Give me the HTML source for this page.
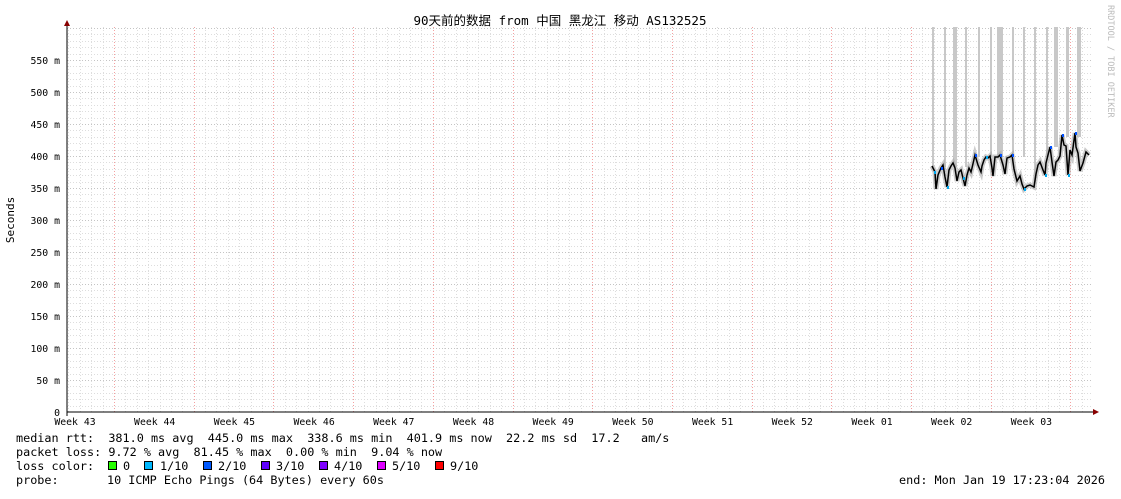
<!DOCTYPE html>
<html><head><meta charset="utf-8"><style>
body{margin:0;background:#fff;width:1121px;height:494px;overflow:hidden}
svg text{font-family:"DejaVu Sans Mono","Liberation Mono","Noto Sans CJK SC",monospace;font-size:9.8px;fill:#000}
svg text.lg{font-size:11.8px}
</style></head><body>
<svg width="1121" height="494" xmlns="http://www.w3.org/2000/svg">
<rect width="1121" height="494" fill="#fff"/>
<g id="grid"></g>
<g fill="#c8c8c8">
<rect x="932" y="27" width="2" height="140"/><rect x="944" y="27" width="2" height="140"/>
<rect x="953" y="27" width="4" height="140"/><rect x="965" y="27" width="2" height="140"/>
<rect x="978" y="27" width="2" height="130"/><rect x="990" y="27" width="2" height="130"/>
<rect x="997" y="27" width="6" height="130"/><rect x="1012" y="27" width="2" height="130"/>
<rect x="1023" y="27" width="2" height="130"/><rect x="1034" y="27" width="2" height="155"/>
<rect x="1046" y="27" width="2" height="130"/><rect x="1054" y="27" width="4" height="120"/>
<rect x="1066" y="27" width="3" height="110"/><rect x="1077" y="27" width="4" height="110"/>
</g>
<polyline fill="none" stroke="#aaa" stroke-width="5" opacity="0.6" points="932,166 935,172 936,189 938,175 941,168 943,165 945,177 947,187 949,170 951,166 953,163 955,168 957,181 959,172 961,170 963,178 965,186 967,175 969,168 971,172 972,168 975,155 978,165 981,172 982,166 984,160 986,157 988,158 990,156 992,168 993,176 995,157 998,157 1000,155 1003,165 1005,174 1007,158 1010,157 1012,155 1014,169 1017,181 1020,176 1022,184 1024,189 1027,186 1030,185 1034,187 1036,174 1038,165 1040,162 1043,170 1045,175 1046,163 1048,155 1050,147 1052,162 1054,176 1056,162 1058,160 1060,156 1062,135 1064,145 1066,146 1068,175 1070,150 1072,155 1075,133 1076,147 1078,153 1080,171 1083,163 1086,152 1089,155"/>
<polyline fill="none" stroke="#000" stroke-width="1.5" points="932,166 935,172 936,189 938,175 941,168 943,165 945,177 947,187 949,170 951,166 953,163 955,168 957,181 959,172 961,170 963,178 965,186 967,175 969,168 971,172 972,168 975,155 978,165 981,172 982,166 984,160 986,157 988,158 990,156 992,168 993,176 995,157 998,157 1000,155 1003,165 1005,174 1007,158 1010,157 1012,155 1014,169 1017,181 1020,176 1022,184 1024,189 1027,186 1030,185 1034,187 1036,174 1038,165 1040,162 1043,170 1045,175 1046,163 1048,155 1050,147 1052,162 1054,176 1056,162 1058,160 1060,156 1062,135 1064,145 1066,146 1068,175 1070,150 1072,155 1075,133 1076,147 1078,153 1080,171 1083,163 1086,152 1089,155"/>
<g fill="#00a8f0"><rect x="934" y="171" width="2" height="3"/><rect x="947" y="186" width="2" height="3"/><rect x="963" y="177" width="2" height="3"/><rect x="986" y="156" width="2" height="3"/><rect x="1024" y="188" width="2" height="3"/><rect x="1045" y="174" width="2" height="3"/><rect x="1068" y="174" width="2" height="3"/></g>
<g fill="#0050ff"><rect x="941" y="167" width="2" height="3"/><rect x="975" y="154" width="2" height="3"/><rect x="1000" y="154" width="2" height="3"/><rect x="1012" y="154" width="2" height="3"/><rect x="1050" y="146" width="2" height="3"/><rect x="1062" y="134" width="2" height="3"/><rect x="1075" y="132" width="2" height="3"/></g>
<line x1="67" y1="412" x2="1095" y2="412" stroke="#000"/>
<line x1="67" y1="25" x2="67" y2="416" stroke="#000"/>
<polygon points="64,26 70,26 67,20" fill="#800"/>
<polygon points="1093,409 1093,415 1099,412" fill="#800"/>
<text x="560" y="25" text-anchor="middle" style="font-size:12.5px">90天前的数据 from 中国 黑龙江 移动 AS132525</text>
<text transform="translate(14,220) rotate(-90)" text-anchor="middle" style="font-size:11px">Seconds</text>
<text transform="translate(1108,5) rotate(90)" style="font-size:8.5px;fill:#bbb">RRDTOOL / TOBI OETIKER</text>
<g text-anchor="end" id="ylab"></g>
<g text-anchor="middle" id="xlab"></g>
<text class="lg" x="16" y="442">median rtt:&#160;&#160;381.0 ms avg&#160;&#160;445.0 ms max&#160;&#160;338.6 ms min&#160;&#160;401.9 ms now&#160;&#160;22.2 ms sd&#160;&#160;17.2&#160;&#160;&#160;am/s</text>
<text class="lg" x="16" y="456">packet loss: 9.72 % avg&#160;&#160;81.45 % max&#160;&#160;0.00 % min&#160;&#160;9.04 % now</text>
<text class="lg" x="16" y="470">loss color:</text>
<g stroke="#000" stroke-width="1">
<rect x="108.5" y="461.5" width="8" height="8" fill="#26ff00"/>
<rect x="144.5" y="461.5" width="8" height="8" fill="#00b8ff"/>
<rect x="203.5" y="461.5" width="8" height="8" fill="#0059ff"/>
<rect x="261.5" y="461.5" width="8" height="8" fill="#5e00ff"/>
<rect x="319.5" y="461.5" width="8" height="8" fill="#7e00ff"/>
<rect x="377.5" y="461.5" width="8" height="8" fill="#dd00ff"/>
<rect x="435.5" y="461.5" width="8" height="8" fill="#ff0000"/>
</g>
<text class="lg" x="123" y="470">0</text><text class="lg" x="160" y="470">1/10</text><text class="lg" x="218" y="470">2/10</text><text class="lg" x="276" y="470">3/10</text><text class="lg" x="334" y="470">4/10</text><text class="lg" x="392" y="470">5/10</text><text class="lg" x="450" y="470">9/10</text>
<text class="lg" x="16" y="484">probe:</text>
<text class="lg" x="107" y="484">10 ICMP Echo Pings (64 Bytes) every 60s</text>
<text class="lg" x="1105" y="484" text-anchor="end">end: Mon Jan 19 17:23:04 2026</text>
</svg>
<script>
var ns="http://www.w3.org/2000/svg",g=document.getElementById("grid");
function L(x1,y1,x2,y2,c,d){var l=document.createElementNS(ns,"line");l.setAttribute("x1",x1);l.setAttribute("y1",y1);l.setAttribute("x2",x2);l.setAttribute("y2",y2);l.setAttribute("stroke",c);l.setAttribute("stroke-width","1");if(d)l.setAttribute("stroke-dasharray",d);g.appendChild(l);}
for(var v=10;v<=600;v+=10){var y=Math.round(412-v*0.64)+0.5;L(67,y,1093,y,v%50?"#ddd":"#c4c4c4","1,2");}
var step=79.7/7;
for(var i=-4;i<90;i++){var x=114+i*step;if(x<68||x>1093)continue;var w=((i%7)+7)%7==0;L(Math.round(x)+0.5,27,Math.round(x)+0.5,412,w?"#f4a0a0":"#ddd","1,2");}
var yl=document.getElementById("ylab");
for(var v=0;v<=550;v+=50){var t=document.createElementNS(ns,"text");t.setAttribute("x",60);t.setAttribute("y",Math.round(412-v*0.64)+4);t.textContent=v==0?"0":v+" m";yl.appendChild(t);}
var xl=document.getElementById("xlab"),w=[43,44,45,46,47,48,49,50,51,52,"01","02","03"];
for(var i=0;i<13;i++){var t=document.createElementNS(ns,"text");t.setAttribute("x",75+i*79.7);t.setAttribute("y",425);t.textContent="Week "+w[i];xl.appendChild(t);}
</script>
</body></html>
